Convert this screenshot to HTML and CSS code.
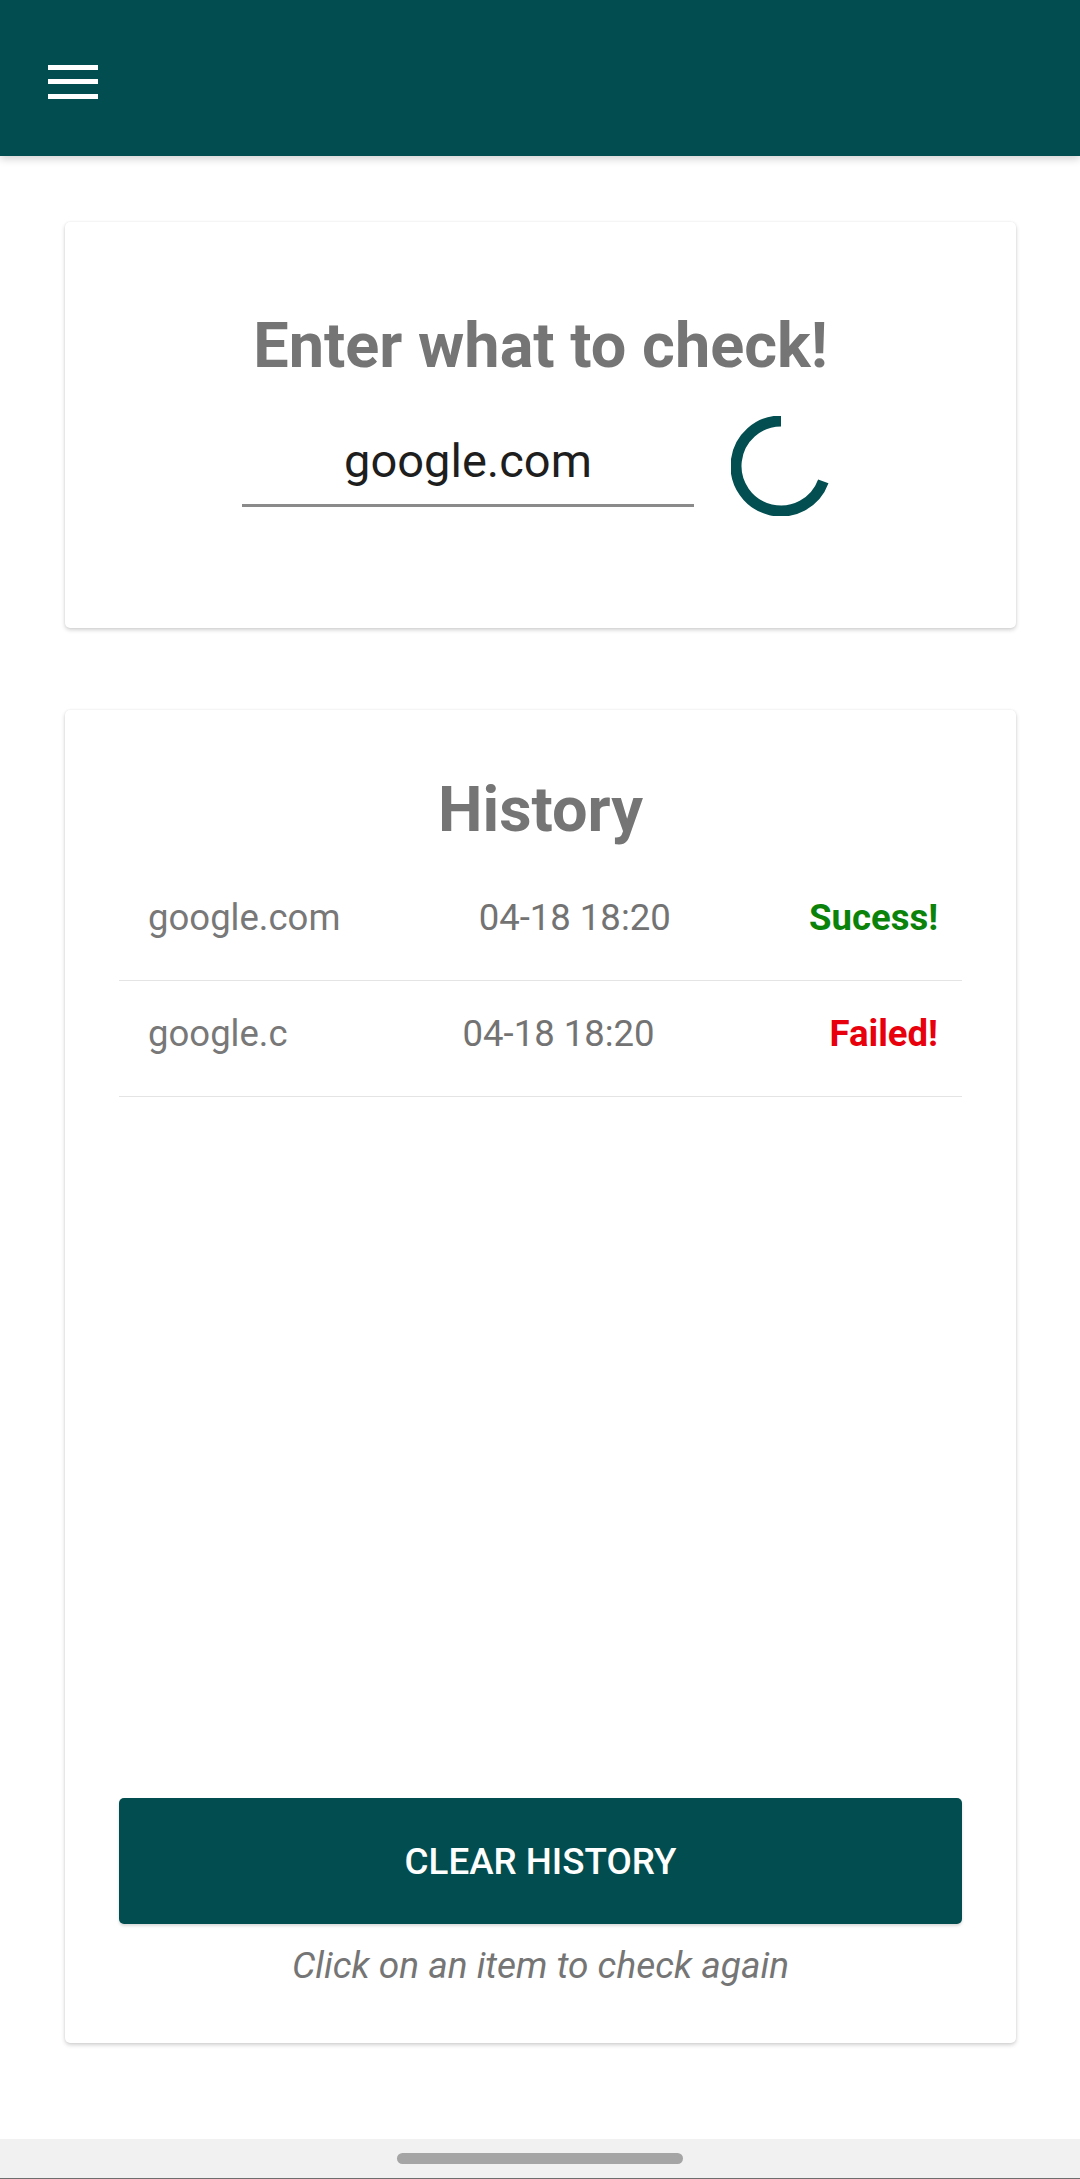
FILE: index.html
```html
<!DOCTYPE html>
<html lang="en">
<head>
<meta charset="utf-8">
<title>Checker</title>
<link rel="stylesheet" href="styles.css">
</head>
<body>
<header class="appbar">
  <svg class="menu-icon" width="50" height="34" viewBox="0 0 50 34" aria-label="Menu">
    <rect x="0" y="0" width="50" height="5" fill="#ffffff"/>
    <rect x="0" y="14" width="50" height="5" fill="#ffffff"/>
    <rect x="0" y="29" width="50" height="5" fill="#ffffff"/>
  </svg>
</header>
<main class="content">
  <section class="card check-card">
    <h1 class="card-title">Enter what to check!</h1>
    <div class="input-row">
      <div class="text-input">google.com</div>
      <svg class="spinner" width="100" height="100" viewBox="0 0 100 100" aria-label="Loading">
        <path d="M 92.3 65.4 A 45 45 0 1 1 50 5" fill="none" stroke="#024e50" stroke-width="11"/>
      </svg>
    </div>
  </section>
  <section class="card history-card">
    <h2 class="card-title">History</h2>
    <ul class="history-list">
      <li class="history-item">
        <span class="item-name">google.com</span>
        <span class="item-date">04-18 18:20</span>
        <span class="item-status success">Sucess!</span>
      </li>
      <li class="history-item">
        <span class="item-name">google.c</span>
        <span class="item-date">04-18 18:20</span>
        <span class="item-status failed">Failed!</span>
      </li>
    </ul>
    <button class="clear-btn">CLEAR HISTORY</button>
    <p class="hint">Click on an item to check again</p>
  </section>
</main>
<footer class="navbar">
  <div class="nav-pill"></div>
</footer>
</body>
</html>
```

FILE: styles.css
```css
* {
  box-sizing: border-box;
}

html, body {
  margin: 0;
  padding: 0;
}

body {
  width: 1080px;
  height: 2179px;
  display: flex;
  flex-direction: column;
  background: #ffffff;
  font-family: Roboto, "Noto Sans", "Liberation Sans", sans-serif;
  overflow: hidden;
}

.appbar {
  height: 156px;
  flex: 0 0 156px;
  background: #014d4f;
  display: flex;
  align-items: flex-start;
  padding: 65px 0 0 48px;
  box-shadow: 0 3px 8px rgba(0, 0, 0, 0.18);
  position: relative;
  z-index: 2;
}

.menu-icon {
  display: block;
}

.content {
  flex: 1 1 auto;
  display: flex;
  flex-direction: column;
  padding: 66px 64px 0 65px;
}

.card {
  background: #ffffff;
  border-radius: 5px;
  box-shadow: 0 2px 4px rgba(0, 0, 0, 0.18), 0 0 2px rgba(0, 0, 0, 0.08);
}

.card-title {
  margin: 0;
  text-align: center;
  font-size: 63px;
  line-height: 72px;
  font-weight: 700;
  color: #757575;
}

.check-card {
  height: 406px;
  padding-top: 88px;
}

.input-row {
  display: flex;
  justify-content: center;
  align-items: center;
  gap: 37px;
  margin-top: 34px;
}

.text-input {
  width: 452px;
  font-size: 47px;
  line-height: 54px;
  text-align: center;
  color: #1e1e1e;
  padding-bottom: 16px;
  border-bottom: 3px solid #8a8a8a;
}

.spinner {
  display: block;
  margin-bottom: 9px;
  margin-right: 8px;
}

.history-card {
  margin-top: 82px;
  height: 1333px;
  padding: 64px 54px 56px 54px;
  display: flex;
  flex-direction: column;
}

.history-list {
  list-style: none;
  margin: 19px 0 0 0;
  padding: 0;
  flex: 1 1 auto;
}

.history-item {
  display: flex;
  padding: 31px 24px 41px 29px;
  border-bottom: 1px solid #e4e4e4;
  font-size: 36.5px;
  line-height: 43px;
}

.history-item > span {
  flex: 1 1 auto;
  white-space: nowrap;
}

.item-name {
  text-align: left;
  color: #787878;
}

.item-date {
  text-align: center;
  color: #737373;
}

.item-status {
  text-align: right;
  font-weight: 700;
}

.success {
  color: #0b830b;
}

.failed {
  color: #e8000c;
}

.clear-btn {
  display: block;
  width: 100%;
  height: 126px;
  border: none;
  border-radius: 5px;
  background: #014d4f;
  color: #ffffff;
  font-family: Roboto, "Noto Sans", "Liberation Sans", sans-serif;
  font-size: 36.75px;
  font-weight: 500;
  letter-spacing: 0;
  box-shadow: 0 2px 3px rgba(0, 0, 0, 0.15);
}

.hint {
  margin: 20px 0 0 0;
  text-align: center;
  font-size: 37px;
  line-height: 43px;
  font-style: italic;
  color: #757575;
}

.navbar {
  flex: 0 0 40px;
  height: 40px;
  background: #f1f1f1;
  border-bottom: 1px solid #6e6e6e;
  display: flex;
  justify-content: center;
  padding-top: 14px;
}

.nav-pill {
  width: 286px;
  height: 11px;
  border-radius: 6px;
  background: #a5a5a5;
}
```
